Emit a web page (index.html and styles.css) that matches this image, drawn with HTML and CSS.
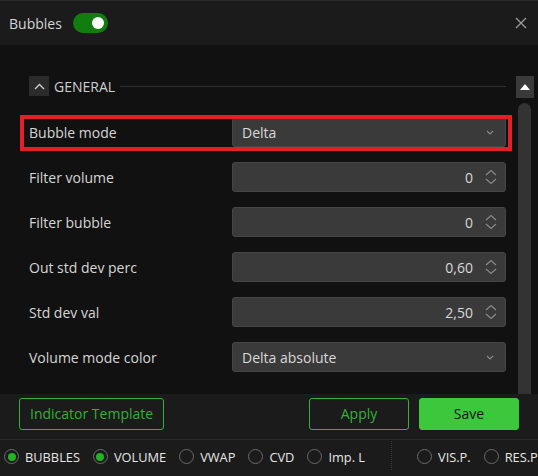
FILE: index.html
```html
<!DOCTYPE html>
<html lang="en">
<head>
    <meta charset="UTF-8">
    <meta name="viewport" content="width=device-width, initial-scale=1.0">
    <title>Bubbles – indicator settings</title>
    <link rel="stylesheet" href="styles.css">
</head>
<body>
    <div class="dialog">
        <header class="dialog-head">
            <span class="dialog-title">Bubbles</span>
            <span class="toggle is-on"><span class="toggle-knob"></span></span>
            <button class="close-btn" type="button" aria-label="Close">
                <svg width="12" height="12" viewBox="0 0 12 12"><path d="M1 1L11 11M11 1L1 11" stroke="currentColor" stroke-width="1.4" fill="none"/></svg>
            </button>
        </header>

        <div class="dialog-body">
            <div class="settings">
                <div class="section-head">
                    <button class="collapse-btn" type="button">
                        <svg width="11" height="7" viewBox="0 0 11 7"><path d="M1 6L5.5 1.5L10 6" stroke="currentColor" stroke-width="1.3" fill="none"/></svg>
                    </button>
                    <span class="section-title">GENERAL</span>
                    <span class="section-line"></span>
                </div>

                <div class="field-list">
                    <div class="field-row is-highlighted">
                        <label class="field-label">Bubble mode</label>
                        <div class="field-box is-select">
                            <span class="field-value">Delta</span>
                            <svg class="select-arrow" width="8" height="5" viewBox="0 0 8 5"><path d="M1 1L4 4L7 1" stroke="currentColor" stroke-width="1.1" fill="none"/></svg>
                        </div>
                    </div>
                    <div class="field-row">
                        <label class="field-label">Filter volume</label>
                        <div class="field-box is-number">
                            <span class="field-value">0</span>
                            <svg class="spinner" width="12" height="16" viewBox="0 0 12 16"><path d="M1 6L6 1.5L11 6M1 10L6 14.5L11 10" stroke="currentColor" stroke-width="1.1" fill="none"/></svg>
                        </div>
                    </div>
                    <div class="field-row">
                        <label class="field-label">Filter bubble</label>
                        <div class="field-box is-number">
                            <span class="field-value">0</span>
                            <svg class="spinner" width="12" height="16" viewBox="0 0 12 16"><path d="M1 6L6 1.5L11 6M1 10L6 14.5L11 10" stroke="currentColor" stroke-width="1.1" fill="none"/></svg>
                        </div>
                    </div>
                    <div class="field-row">
                        <label class="field-label">Out std dev perc</label>
                        <div class="field-box is-number">
                            <span class="field-value">0,60</span>
                            <svg class="spinner" width="12" height="16" viewBox="0 0 12 16"><path d="M1 6L6 1.5L11 6M1 10L6 14.5L11 10" stroke="currentColor" stroke-width="1.1" fill="none"/></svg>
                        </div>
                    </div>
                    <div class="field-row">
                        <label class="field-label">Std dev val</label>
                        <div class="field-box is-number">
                            <span class="field-value">2,50</span>
                            <svg class="spinner" width="12" height="16" viewBox="0 0 12 16"><path d="M1 6L6 1.5L11 6M1 10L6 14.5L11 10" stroke="currentColor" stroke-width="1.1" fill="none"/></svg>
                        </div>
                    </div>
                    <div class="field-row">
                        <label class="field-label">Volume mode color</label>
                        <div class="field-box is-select">
                            <span class="field-value">Delta absolute</span>
                            <svg class="select-arrow" width="8" height="5" viewBox="0 0 8 5"><path d="M1 1L4 4L7 1" stroke="currentColor" stroke-width="1.1" fill="none"/></svg>
                        </div>
                    </div>
                </div>
            </div>

            <div class="scrollbar">
                <button class="scroll-up" type="button">
                    <svg width="10" height="6" viewBox="0 0 10 6"><path d="M0 6L5 0L10 6Z" fill="#fff"/></svg>
                </button>
                <div class="scroll-thumb"></div>
            </div>
        </div>

        <div class="dialog-foot">
            <button class="btn btn-outline" type="button">Indicator Template</button>
            <div class="foot-actions">
                <button class="btn btn-outline" type="button">Apply</button>
                <button class="btn btn-solid" type="button">Save</button>
            </div>
        </div>

        <nav class="indicator-bar">
            <span class="radio-item"><span class="radio is-checked"></span>BUBBLES</span>
            <span class="radio-item"><span class="radio is-checked"></span>VOLUME</span>
            <span class="radio-item"><span class="radio"></span>VWAP</span>
            <span class="radio-item"><span class="radio"></span>CVD</span>
            <span class="radio-item"><span class="radio"></span>Imp. L</span>
            <span class="bar-divider"></span>
            <span class="radio-item"><span class="radio"></span>VIS.P.</span>
            <span class="radio-item"><span class="radio"></span>RES.P.</span>
        </nav>
    </div>
</body>
</html>
```

FILE: styles.css
```css
:root {
    --bg-dark: #111111;
    --bg-panel: #1b1b1b;
    --field-bg: #3a3a3a;
    --field-border: #464646;
    --text-color: #d6d6d6;
    --muted: #8c8c8c;
    --green: #3cc83c;
    --green-line: #36b036;
    --highlight: #e3202a;
}
body {
    margin: 0;
    background-color: var(--bg-dark);
    font-family: 'Open Sans', 'Noto Sans', sans-serif;
    font-size: 14px;
    color: var(--text-color);
}
button {
    font-family: inherit;
    cursor: pointer;
}
.dialog {
    width: 538px;
    height: 476px;
    display: flex;
    flex-direction: column;
    overflow: hidden;
    background-color: var(--bg-dark);
}

/* header */
.dialog-head {
    height: 44px;
    flex: none;
    display: flex;
    align-items: center;
    padding: 0 11px 0 9px;
    background-color: var(--bg-panel);
    border-top: 1px solid #2a2a2a;
}
.dialog-title {
    font-size: 14px;
    color: #d4d4d4;
    margin-right: 11px;
}
.toggle {
    width: 35px;
    height: 20px;
    border-radius: 10px;
    background-color: #3a3a3a;
    display: flex;
    align-items: center;
    padding: 0 4px;
    box-sizing: border-box;
}
.toggle.is-on {
    background-color: #117d11;
    justify-content: flex-end;
}
.toggle-knob {
    width: 12px;
    height: 12px;
    border-radius: 50%;
    background-color: #fff;
}
.close-btn {
    margin-left: auto;
    background: none;
    border: none;
    padding: 0;
    color: #9a9a9a;
    display: flex;
}

/* body */
.dialog-body {
    flex: 1;
    display: flex;
    padding: 0 4px 0 29px;
    gap: 10px;
    min-height: 0;
}
.settings {
    flex: 1;
    padding-top: 31px;
}
.section-head {
    display: flex;
    align-items: center;
    height: 20px;
}
.collapse-btn {
    width: 20px;
    height: 20px;
    padding: 0;
    border: none;
    background-color: #2b2b2b;
    color: #d0d0d0;
    display: flex;
    align-items: center;
    justify-content: center;
}
.section-title {
    margin-left: 5px;
    color: #cfcfcf;
}
.section-line {
    flex: 1;
    height: 1px;
    margin-left: 5px;
    background-color: #2e2e2e;
}
.field-list {
    display: flex;
    flex-direction: column;
    gap: 15px;
    margin-top: 21px;
}
.field-row {
    display: grid;
    grid-template-columns: 203px 1fr;
    align-items: center;
    height: 30px;
    position: relative;
}
.field-row.is-highlighted::after {
    content: "";
    position: absolute;
    top: -2px;
    left: -9px;
    right: -6px;
    bottom: -4px;
    border: 4px solid var(--highlight);
    pointer-events: none;
}
.field-label {
    color: var(--text-color);
}
.field-box {
    height: 30px;
    box-sizing: border-box;
    display: flex;
    align-items: center;
    background-color: var(--field-bg);
    border: 1px solid var(--field-border);
    border-radius: 3px;
    color: #d8d8d8;
}
.field-box.is-select {
    padding: 0 11px 0 9px;
}
.field-box.is-select .field-value {
    flex: 1;
}
.select-arrow {
    color: var(--muted);
}
.field-box.is-number {
    justify-content: flex-end;
    padding-right: 8px;
}
.spinner {
    margin-left: 12px;
    color: var(--muted);
}

/* scrollbar */
.scrollbar {
    width: 18px;
    display: flex;
    flex-direction: column;
    align-items: center;
    padding-top: 31px;
    gap: 5px;
}
.scroll-up {
    width: 18px;
    height: 22px;
    padding: 0;
    border: none;
    background-color: #3a3a3a;
    display: flex;
    align-items: center;
    justify-content: center;
}
.scroll-thumb {
    flex: 1;
    width: 13px;
    margin-right: 1px;
    border-radius: 7px 7px 0 0;
    background-color: #333;
}

/* footer buttons */
.dialog-foot {
    height: 46px;
    flex: none;
    display: flex;
    justify-content: space-between;
    align-items: flex-start;
    padding: 4px 19px 0;
    box-sizing: border-box;
    background-color: var(--bg-panel);
    border-bottom: 1px solid #2a2a2a;
}
.foot-actions {
    display: flex;
    gap: 10px;
}
.btn {
    height: 32px;
    border-radius: 3px;
    font-size: 14px;
    padding: 0 10px 1px;
}
.btn-outline {
    background-color: transparent;
    border: 1px solid var(--green-line);
    color: var(--green-line);
}
.foot-actions .btn {
    width: 100px;
}
.btn-solid {
    background-color: var(--green);
    border: 1px solid var(--green);
    color: #141414;
}

/* indicator switcher */
.indicator-bar {
    height: 36px;
    flex: none;
    display: flex;
    align-items: center;
    gap: 13px;
    padding: 0 0 3px 4px;
    box-sizing: border-box;
    background-color: var(--bg-panel);
    white-space: nowrap;
}
.radio-item {
    display: flex;
    align-items: center;
    gap: 6px;
    font-size: 12.8px;
    color: #e6e6e6;
}
.radio {
    width: 15px;
    height: 15px;
    box-sizing: border-box;
    border-radius: 50%;
    border: 1.5px solid #6a6a6a;
    display: flex;
    align-items: center;
    justify-content: center;
    flex: none;
}
.radio.is-checked::after {
    content: "";
    width: 8px;
    height: 8px;
    border-radius: 50%;
    background-color: #22b322;
}
.bar-divider {
    align-self: stretch;
    margin: 1px 12px 3px 13px;
    border-left: 1px dotted #3a3a3a;
}
```
